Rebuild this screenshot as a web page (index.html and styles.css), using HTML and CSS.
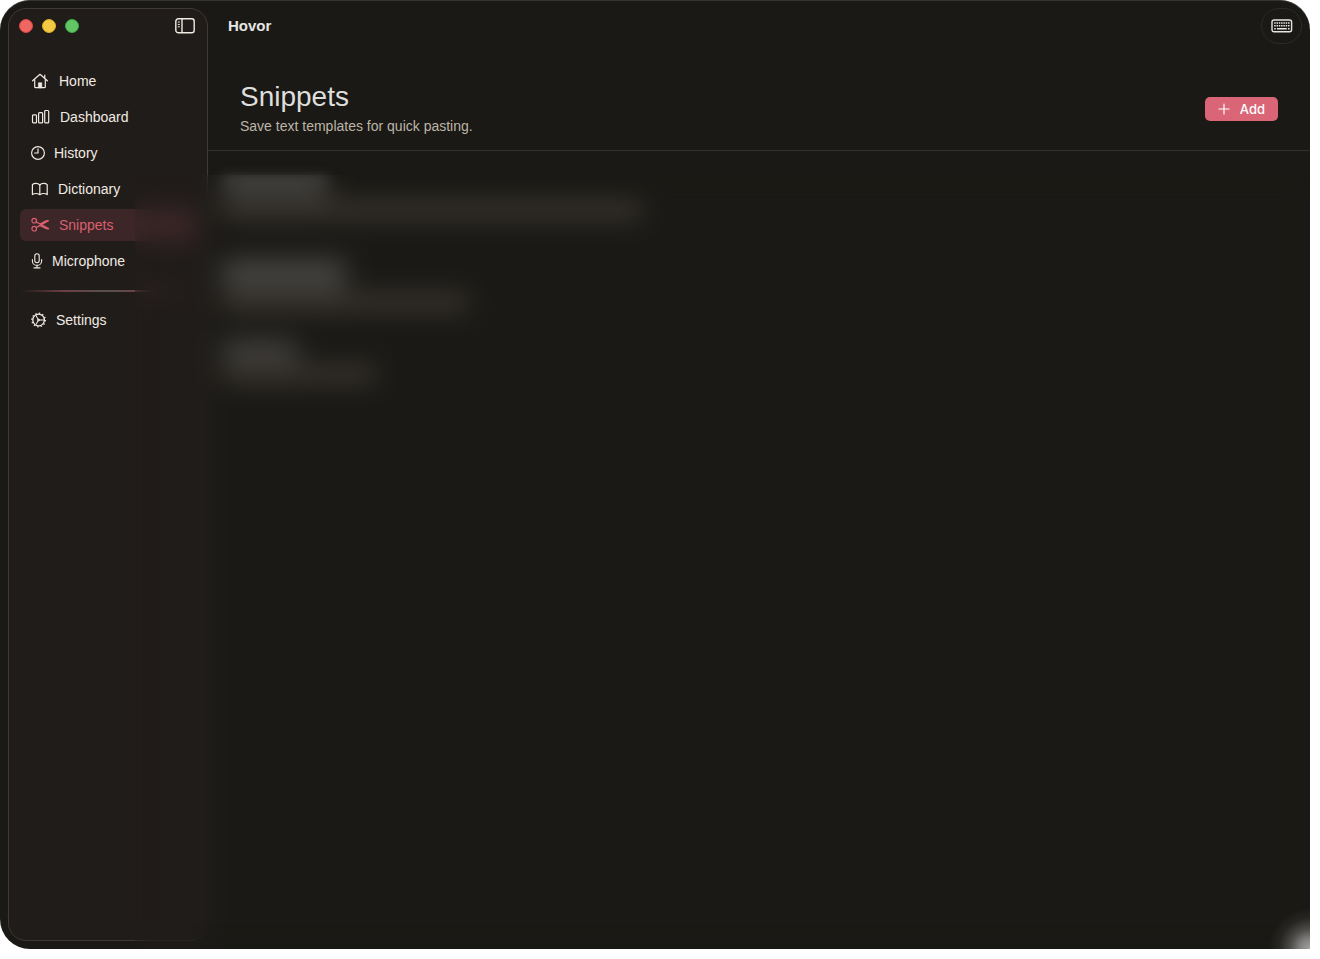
FILE: index.html
```
<!DOCTYPE html>
<html lang="en">
<head>
    <meta charset="UTF-8">
    <meta name="viewport" content="width=device-width, initial-scale=1.0">
    <title>Hovor</title>
    <link rel="stylesheet" href="styles.css">
</head>
<body>
    <div class="window">
        <div class="frame">
            <aside class="sidebar">
                <div class="titlebar">
                    <button type="button" class="light close" aria-label="Close"></button>
                    <button type="button" class="light minimize" aria-label="Minimize"></button>
                    <button type="button" class="light maximize" aria-label="Zoom"></button>
                    <button type="button" class="toggle" aria-label="Toggle sidebar">
                        <svg width="20" height="16" viewBox="0 0 20 16" fill="none" stroke="currentColor" stroke-width="1.4">
                            <rect x="0.8" y="0.8" width="18.4" height="14" rx="2.6"/>
                            <path d="M7 1v13.6"/>
                            <path d="M2.8 4h2M2.8 6.4h2M2.8 8.8h2" stroke-width="1"/>
                        </svg>
                    </button>
                </div>
                <nav class="nav">
                    <a href="#home">
                        <svg width="19" height="16" viewBox="0 0 19 16" fill="none" stroke="currentColor" stroke-width="1.2" stroke-linecap="round" stroke-linejoin="round">
                            <path d="M1.6 7.8L9 1.3l7.4 6.5M13.8 5.2V2.2"/>
                            <path d="M3.7 6.5v7.2q0 .9.9.9h8.8q.9 0 .9-.9V6.5"/>
                            <path d="M7.4 14.4V9.8h3.4v4.6z" fill="currentColor" stroke-width="0.6"/>
                        </svg>
                        Home
                    </a>
                    <a href="#dashboard">
                        <svg width="20" height="16" viewBox="0 0 20 16" fill="none" stroke="currentColor" stroke-width="1.2">
                            <rect x="1.5" y="5.8" width="4" height="8" rx="0.9"/>
                            <rect x="7.6" y="3.7" width="4" height="10.1" rx="0.9"/>
                            <rect x="13.7" y="1.5" width="4" height="12.3" rx="0.9"/>
                        </svg>
                        Dashboard
                    </a>
                    <a href="#history">
                        <svg width="14" height="16" viewBox="0 0 14 16" fill="none" stroke="currentColor" stroke-width="1.2" stroke-linecap="round">
                            <circle cx="7" cy="8" r="6.4"/>
                            <path d="M7 3.8V8H3.6"/>
                        </svg>
                        History
                    </a>
                    <a href="#dictionary">
                        <svg width="18" height="16" viewBox="0 0 18 16" fill="none" stroke="currentColor" stroke-width="1.2" stroke-linejoin="round">
                            <path d="M8.8 4Q7.4 2.4 5 2.4T1.4 3.6v10Q3 12.5 5 12.5t3.8 1.2q1.8-1.2 3.8-1.2t3.6 1.1v-10Q15 2.4 12.6 2.4T8.8 4z"/>
                            <path d="M8.8 4v9.6"/>
                        </svg>
                        Dictionary
                    </a>
                    <a href="#snippets" class="active" aria-current="page">
                        <svg width="19" height="16" viewBox="0 0 19 16" fill="none" stroke="currentColor" stroke-width="1.2" stroke-linecap="round" stroke-linejoin="round">
                            <circle cx="3.2" cy="3.7" r="2.3"/>
                            <circle cx="3.2" cy="11.7" r="2.3"/>
                            <path d="M5.2 4.9L9 7l6-3.1q1.2-.6 2.6-.1L7.8 9.1 5.2 10.5"/>
                            <path d="M10.6 7.9l7 3.7q-1.4.5-2.6-.1L8.8 8.5"/>
                        </svg>
                        Snippets
                    </a>
                    <a href="#microphone">
                        <svg width="12" height="16" viewBox="0 0 12 16" fill="none" stroke="currentColor" stroke-width="1.1" stroke-linecap="round">
                            <rect x="3.8" y="0.8" width="4.4" height="9" rx="2.2"/>
                            <path d="M1.4 6.6v1.6a4.6 4.2 0 0 0 9.2 0V6.6M6 12.4v2.4M3 14.9h6"/>
                        </svg>
                        Microphone
                    </a>
                    <hr class="divider">
                    <a href="#settings">
                        <svg width="16" height="16" viewBox="0 0 16 16" fill="none" stroke="currentColor" stroke-width="1.3">
                            <circle cx="7.6" cy="8" r="5.8"/>
                            <circle cx="7.6" cy="8" r="6.8" stroke-width="1.2" stroke-dasharray="1.4 2.16"/>
                            <path d="M5 3.6l1.8 3.2v2.4L5 12.4M6.8 6.8L9 8l-2.2 1.2M9 8h4.4" stroke-width="1.1"/>
                        </svg>
                        Settings
                    </a>
                </nav>
            </aside>
            <main class="main">
                <div class="toolbar">
                    <span class="app-name">Hovor</span>
                    <button type="button" class="keyboard" aria-label="Keyboard shortcuts">
                        <svg width="22" height="14" viewBox="0 0 22 14" fill="none" stroke="currentColor">
                            <rect x="1" y="1" width="19.6" height="11.8" rx="2" stroke-width="1.4"/>
                            <path d="M3.2 4h15.4M3.2 6.8h15.4" stroke-width="1.6" stroke-dasharray="1.5 0.8"/>
                            <path d="M3.2 9.8h1.6M6 9.8h9.8M17 9.8h1.6" stroke-width="1.4"/>
                        </svg>
                    </button>
                </div>
                <header class="header">
                    <div>
                        <h1>Snippets</h1>
                        <p>Save text templates for quick pasting.</p>
                    </div>
                    <button type="button" class="add">
                        <svg width="12" height="12" viewBox="0 0 12 12" fill="none" stroke="currentColor" stroke-width="1.2" stroke-linecap="round">
                            <path d="M6 1v10M1 6h10"/>
                        </svg>
                        Add
                    </button>
                </header>
                <ul class="snippets">
                    <li><span class="name name-medium"></span><span class="body body-long"></span></li>
                    <li><span class="name name-long"></span><span class="body body-medium"></span></li>
                    <li><span class="name name-short"></span><span class="body body-short"></span></li>
                </ul>
            </main>
        </div>
        <!-- frosted cover that hides private snippets -->
        <div class="privacy"></div>
    </div>
</body>
</html>
```
FILE: styles.css
```
* {
    box-sizing: border-box;
}
body {
    margin: 0;
    padding: 0 10px 10px 0;
    height: 100vh;
    background: #fff;
    color: #f0ebe2;
    font-family: "Liberation Sans", Arial, sans-serif;
    font-size: 14px;
}
button {
    border: none;
    padding: 0;
    background: none;
    color: inherit;
    cursor: pointer;
}
.window {
    position: relative;
    height: 100%;
}
.frame {
    display: flex;
    height: 100%;
    background: #1a1915;
    border-radius: 30px 30px 0 30px;
    border-top: 1px solid #343430;
    overflow: hidden;
}
.sidebar {
    width: 200px;
    margin: 7px 0 8px 8px;
    padding: 0 11px;
    background: #201c1a;
    border: 1px solid #403935;
    border-radius: 18px;
}
.titlebar {
    display: flex;
    align-items: center;
    gap: 9px;
    height: 34px;
}
.light {
    width: 14px;
    height: 14px;
    border-radius: 50%;
}
.light.close {
    margin-left: -1px;
    background: #ee6762;
    border: 1px solid #e2443f;
}
.light.minimize {
    background: #f4c944;
    border: 1px solid #dfae22;
}
.light.maximize {
    background: #62c566;
    border: 1px solid #3daa42;
}
.toggle {
    display: flex;
    margin: 0 1px 0 auto;
}
.nav {
    display: flex;
    flex-direction: column;
    gap: 4px;
    margin-top: 22px;
}
.nav a {
    display: flex;
    align-items: center;
    gap: 9px;
    height: 32px;
    padding: 0 11px;
    border-radius: 6px;
    color: inherit;
    text-decoration: none;
}
.nav svg {
    flex: none;
}
.nav a.active {
    background: #3c2628;
    color: #d9606f;
}
.divider {
    width: 100%;
    height: 2px;
    margin: 9px 0 8px;
    border: none;
    background: linear-gradient(90deg, transparent, #6d3e42 25%, #57504d 50%, #6d3e42 70%, transparent);
}
.main {
    flex: 1;
    min-width: 0;
}
.toolbar {
    display: flex;
    align-items: center;
    justify-content: space-between;
    height: 50px;
    padding: 0 8px 0 20px;
}
.app-name {
    font-size: 15px;
    font-weight: bold;
    line-height: 16px;
    color: #e6e6e4;
}
.keyboard {
    display: flex;
    align-items: center;
    justify-content: center;
    width: 41px;
    height: 36px;
    border: 1px solid #2c2b28;
    border-radius: 18px;
    color: #e6e6e4;
}
.header {
    display: flex;
    align-items: center;
    justify-content: space-between;
    padding: 31px 32px 14px;
    border-bottom: 1px solid #32312d;
}
h1 {
    margin: 0 0 4px;
    font-size: 28px;
    font-weight: normal;
    line-height: 30px;
    color: #dededc;
}
.header p {
    margin: 0;
    line-height: 20px;
    color: #bdb5a8;
}
.add {
    display: flex;
    align-items: center;
    gap: 10px;
    height: 24px;
    padding: 0 13px;
    border-radius: 5px;
    background: #da6576;
    color: #fff;
    font-family: Inter, "Liberation Sans", sans-serif;
    font-size: 13px;
    font-weight: 500;
}
.snippets {
    margin: 0;
    padding: 26px 14px;
    list-style: none;
}
.snippets li {
    display: flex;
    flex-direction: column;
    gap: 2px;
    height: 82px;
}
.name,
.body {
    filter: blur(6px);
}
.name {
    height: 22px;
    background: #464542;
}
.body {
    height: 18px;
    background: #3d3833;
}
.name-short {
    width: 76px;
}
.name-medium {
    width: 106px;
}
.name-long {
    width: 124px;
    height: 32px;
}
.body-short {
    width: 154px;
}
.body-medium {
    width: 246px;
}
.body-long {
    width: 420px;
}
.privacy {
    position: absolute;
    top: 175px;
    right: 0;
    bottom: 0;
    left: 135px;
    background: radial-gradient(circle at 100% 100%, rgba(255, 255, 255, 0.6), rgba(255, 255, 255, 0.45) 10px, rgba(255, 255, 255, 0.22) 20px, rgba(255, 255, 255, 0.06) 31px, transparent 42px);
    backdrop-filter: blur(12px);
}
```
